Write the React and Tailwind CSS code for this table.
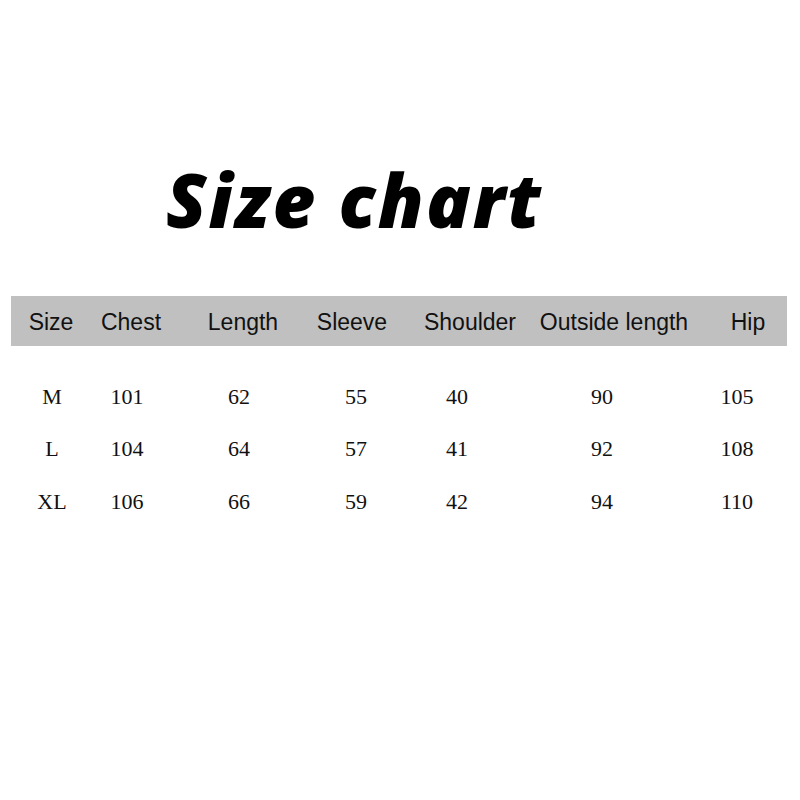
import React from "react";

const headers = ["Size", "Chest", "Length", "Sleeve", "Shoulder", "Outside length", "Hip"];

const rows = [
  ["M", "101", "62", "55", "40", "90", "105"],
  ["L", "104", "64", "57", "41", "92", "108"],
  ["XL", "106", "66", "59", "42", "94", "110"],
];

export default function App() {
  return (
    <div className="w-[800px] h-[800px] bg-white overflow-hidden">
      {/* Title */}
      <div className="pt-[155px] pl-[166px] h-[296px]">
        <h1
          className="text-[74px] leading-[90px] font-extrabold italic text-black tracking-[2px]"
          style={{ fontFamily: '"Open Sans", "Noto Sans", sans-serif' }}
        >
          Size chart
        </h1>
      </div>

      {/* Header bar */}
      <div className="ml-[11px] w-[776px] h-[50px] bg-[#c0c0c0] overflow-hidden">
        <div
          className="grid grid-cols-[80px_80px_144px_74px_162px_126px_142px] h-full items-center pt-[2px] text-[23px] text-[#111]"
          style={{ fontFamily: '"Liberation Sans", Arial, sans-serif' }}
        >
          {headers.map((h) => (
            <div key={h} className="flex justify-center whitespace-nowrap">
              {h}
            </div>
          ))}
        </div>
      </div>

      {/* Data rows */}
      <div
        className="pt-[24px] text-[22px] text-[#111]"
        style={{ fontFamily: '"Liberation Serif", "Times New Roman", serif' }}
      >
        {rows.map((r) => (
          <div
            key={r[0]}
            className="grid grid-cols-[104px_46px_178px_56px_146px_144px_126px] h-[52.5px] items-center"
          >
            {r.map((c, i) => (
              <div key={i} className="flex justify-center whitespace-nowrap">
                {c}
              </div>
            ))}
          </div>
        ))}
      </div>
    </div>
  );
}
